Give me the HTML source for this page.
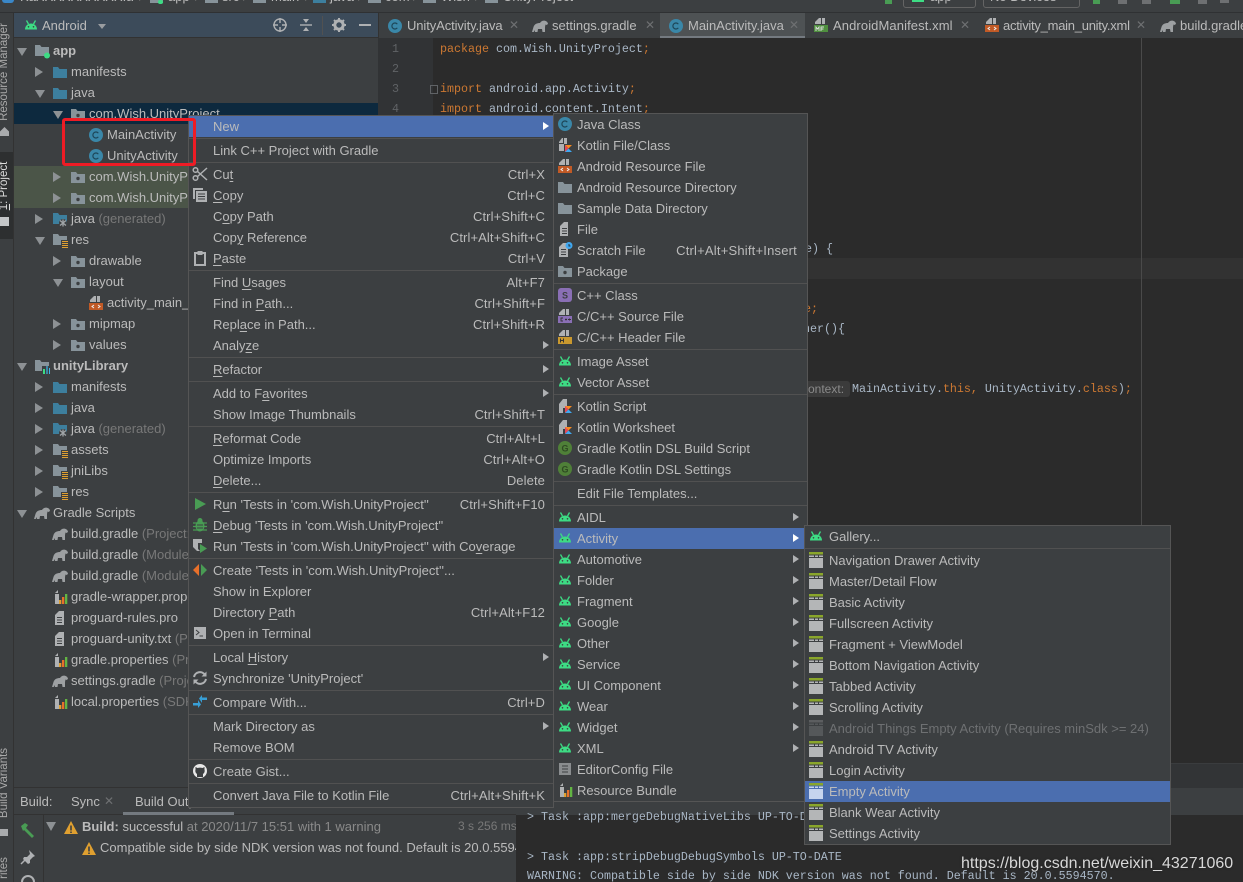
<!DOCTYPE html>
<html><head><meta charset="utf-8"><title>Android Studio</title>
<style>
*{box-sizing:border-box}
html,body{margin:0;padding:0;width:1243px;height:882px;overflow:hidden;background:#3c3f41}
body{position:relative;font:13px/21px "Liberation Sans",sans-serif;color:#bbb}
#root{position:absolute;left:0;top:0;width:1243px;height:882px;overflow:hidden}
.p{position:absolute;white-space:nowrap}
svg{position:absolute;overflow:visible}
u{text-decoration-thickness:1px;text-underline-offset:2px}
.mono{font-family:"Liberation Mono",monospace;font-size:11.67px;line-height:20px;color:#a9b7c6}
.k{color:#cc7832}
.tree{position:absolute;left:14px;top:40px;width:364px}
.r{position:relative;height:21px;white-space:nowrap;color:#bbb}
.r svg.ic{width:16px;height:16px;top:3px}
.r .ar{position:absolute;top:6px;width:0;height:0}
.ar.c{border-left:8px solid #8d9194;border-top:5px solid transparent;border-bottom:5px solid transparent}
.ar.o{border-top:8px solid #8d9194;border-left:5px solid transparent;border-right:5px solid transparent;margin-top:2px}
.t0{padding-left:39px}.t0 .ar{left:3px}.t0 svg.ic{left:20px}
.t1{padding-left:57px}.t1 .ar{left:21px}.t1 svg.ic{left:38px}
.t2{padding-left:75px}.t2 .ar{left:39px}.t2 svg.ic{left:56px}
.t3{padding-left:93px}.t3 svg.ic{left:74px}
.g{color:#787878}.b{font-weight:bold}
.menu{position:absolute;background:#3c3f41;border:1px solid #555}
.m{position:relative;height:21px;padding-left:24px;white-space:nowrap;color:#bbb}
.m svg{width:16px;height:16px;left:3px;top:2px}
.m b{position:absolute;right:8px;top:0;font-weight:normal;letter-spacing:.1px}
.m.s:after{content:"";position:absolute;right:4px;top:6px;border-left:6px solid #afb1b3;border-top:4.5px solid transparent;border-bottom:4.5px solid transparent}
.m.h{background:#4b6eaf}
.m.h.s:after{border-left-color:#fff}
#m2 .m{padding-left:23px}
#m2 .m.s:after{right:8px}
#m2 .m b{right:10px;letter-spacing:.2px}
.sp{height:3px;position:relative}
.sp:after{content:"";position:absolute;left:0;right:0;top:1px;height:1px;background:#515151}
.tab{position:absolute;top:13px;height:25px;line-height:25px;white-space:nowrap;color:#bbb}
.x{position:absolute;top:13px;line-height:25px;color:#6e7072;font-size:12px}
.bc{position:absolute;top:-14px;color:#bbb}
.fo{position:absolute;top:0;width:13px;height:3px;background:#87939a}
.side{font-size:11.5px;line-height:14px;height:14px;text-align:center;color:#aaa;transform:rotate(-90deg)}
</style></head><body><div id="root">
<svg width="0" height="0" style="position:absolute">
<defs>
<symbol id="and" viewBox="0 0 16 16"><path d="M2 12.500c0-3.500 2.500-6 6-6s6 2.500 6 6z" fill="#3ddc84"/><path d="M3.500 3.500l2 3.500M12.500 3.500l-2 3.500" stroke="#3ddc84" stroke-width="1.300"/><circle cx="5.500" cy="9.800" r=".8" fill="#3c3f41"/><circle cx="10.500" cy="9.800" r=".8" fill="#3c3f41"/></symbol>
<symbol id="cls" viewBox="0 0 16 16"><circle cx="8" cy="8" r="7" fill="#3a87a8"/><path d="M10.300 6.200a3 3 0 1 0 0 3.600" fill="none" stroke="#1d4658" stroke-width="1.200"/></symbol>
<symbol id="fb" viewBox="0 0 16 16"><path d="M1 3h5l1.500 2H15v9H1z" fill="#3d7f9e"/></symbol>
<symbol id="fg" viewBox="0 0 16 16"><path d="M1 3h5l1.500 2H15v9H1z" fill="#87939a"/></symbol>
<symbol id="pk" viewBox="0 0 16 16"><path d="M1 3h5l1.500 2H15v9H1z" fill="#87939a"/><circle cx="8" cy="9.500" r="1.700" fill="#3c3f41"/></symbol>
<symbol id="fgen" viewBox="0 0 16 16"><path d="M1 2h5l1.500 2H15v9H1z" fill="#3d7f9e"/><circle cx="11" cy="12" r="4" fill="#3c3f41"/><path d="M8 9.500l6 5M14 9.500l-6 5M11 8.500v7" stroke="#a0a5a8" stroke-width="1.300"/></symbol>
<symbol id="fres" viewBox="0 0 16 16"><path d="M1 2h5l1.500 2H15v9H1z" fill="#87939a"/><rect x="9" y="8" width="7" height="8" fill="#3c3f41"/><path d="M10 9.500h6M10 11.500h6M10 13.500h6M10 15.500h6" stroke="#e0a030" stroke-width="1"/></symbol>
<symbol id="app" viewBox="0 0 16 16"><path d="M1 2h5l1.500 2H15v9H1z" fill="#87939a"/><circle cx="13" cy="12.500" r="3" fill="#3ddc84"/></symbol>
<symbol id="lib" viewBox="0 0 16 16"><path d="M1 2h5l1.500 2H15v9H1z" fill="#87939a"/><rect x="8" y="8" width="9" height="8" fill="#3c3f41"/><rect x="9" y="11" width="2" height="5" fill="#3ddc84"/><rect x="12" y="8" width="2" height="8" fill="#3a87a8"/><rect x="15" y="10" width="2" height="6" fill="#40b6e0"/></symbol>
<symbol id="ele" viewBox="0 0 16 16"><path d="M0 14l1.500-5C2.500 6 5 5 8 5c1-1.800 3-2.800 5-2.300 1.800.4 3 1.800 3 3.300l-1.500 1-1-.5-.5 2.500v5h-2.500l-.5-3H6l-.5 3H3l-.5-2-.7 2z" fill="#9da0a2"/></symbol>
<symbol id="prop" viewBox="0 0 16 16"><path d="M7 1v4H3v10h4z" fill="#afb1b3"/><path d="M6 1l-3 3h3z" fill="#afb1b3"/><rect x="7" y="11" width="2.300" height="4" fill="#e0a030"/><rect x="10" y="8" width="2.300" height="7" fill="#e8702a"/><rect x="13" y="5" width="2.300" height="10" fill="#62b543"/></symbol>
<symbol id="txt" viewBox="0 0 16 16"><path d="M3 5l4-4h5v14H3z" fill="#afb1b3"/><path d="M5 7.500h5M5 10h5M5 12.500h5" stroke="#3c3f41"/></symbol>
<symbol id="ko" viewBox="0 0 16 16"><path d="M2 6l4-5h4v9H6v5H2z" fill="#afb1b3"/><path d="M8 8h7l-3.500 3.500z" fill="#f88a1f"/><path d="M8 8l3.500 3.500L8 15z" fill="#e44857"/><path d="M8 15l3.500-3.500L15 15z" fill="#40a8f0"/></symbol>
<symbol id="kfile" viewBox="0 0 16 16"><path d="M2 5l3-4h1v5H2zM7 1h3v6H7zM2 7h5v7H2z" fill="#afb1b3"/><path d="M8 8h7l-3.500 3.500z" fill="#f88a1f"/><path d="M8 8l3.500 3.500L8 15z" fill="#e44857"/><path d="M8 15l3.500-3.500L15 15z" fill="#40a8f0"/></symbol>
<symbol id="xml" viewBox="0 0 16 16"><path d="M6 1h2v6H2V5zM9 1h3v6H9z" fill="#afb1b3"/><rect x="1" y="8" width="14" height="7" fill="#c15a26"/><path d="M6 10l-2 1.500L6 13M10 10l2 1.500L10 13" fill="none" stroke="#eee" stroke-width="1"/></symbol>
<symbol id="mf" viewBox="0 0 16 16"><path d="M6 1h2v6H2V5zM9 1h3v6H9z" fill="#afb1b3"/><rect x="1" y="8" width="14" height="7" fill="#4f8f3f"/><path d="M3 14v-4l1.500 2 1.500-2v4M8 14v-4h3M8 12h2.500" fill="none" stroke="#ddd" stroke-width=".9"/></symbol>
<symbol id="cpp" viewBox="0 0 16 16"><path d="M6 1h2v6H2V5zM9 1h3v6H9z" fill="#afb1b3"/><rect x="1" y="8" width="14" height="7" fill="#8a6fb5"/><path d="M6 10H4v3h2M8 11.500h2M9 10.500v2M11 11.500h3M12.500 10.500v2" fill="none" stroke="#333" stroke-width=".9"/></symbol>
<symbol id="hdr" viewBox="0 0 16 16"><path d="M6 1h2v6H2V5zM9 1h3v6H9z" fill="#afb1b3"/><rect x="1" y="8" width="14" height="7" fill="#c9982e"/><path d="M3.500 9.500v4M6.500 9.500v4M3.500 11.500h3" stroke="#333" stroke-width="1"/></symbol>
<symbol id="file" viewBox="0 0 16 16"><path d="M3 5l4-4h4v14H3z" fill="#afb1b3"/><path d="M5 7.500h5M5 10h5M5 12.500h5" stroke="#3c3f41"/></symbol>
<symbol id="scr" viewBox="0 0 16 16"><path d="M2 5l4-4h5v14H2z" fill="#afb1b3"/><path d="M4 7.500h5M4 10h5M4 12.500h5" stroke="#3c3f41"/><circle cx="12" cy="3.500" r="3.500" fill="#40a8f0"/><path d="M12 2v2h1.500" stroke="#234" fill="none"/></symbol>
<symbol id="s" viewBox="0 0 16 16"><rect x="1" y="1" width="14" height="14" rx="3" fill="#8a6fb5"/><text x="8" y="11.500" font-size="9" font-weight="bold" text-anchor="middle" fill="#3c3f41" font-family="Liberation Sans">S</text></symbol>
<symbol id="gr" viewBox="0 0 16 16"><circle cx="8" cy="8" r="7" fill="#4f8038"/><text x="8" y="11.500" font-size="9" font-weight="bold" text-anchor="middle" fill="#2e4a22" font-family="Liberation Sans">G</text></symbol>
<symbol id="act" viewBox="0 0 16 16"><rect x="1" y="0" width="14" height="2.500" fill="#8aa62b"/><rect x="1" y="6" width="14" height="10" fill="#b4b6b7"/><path d="M1 4.200h5M7 4.200h3M11 4.200h4" stroke="#b4b6b7" stroke-width="1.500"/></symbol>
<symbol id="actl" viewBox="0 0 16 16"><rect x="1" y="0" width="14" height="2.500" fill="#8aa62b"/><rect x="1" y="6" width="14" height="10" fill="#c6d4ee"/><path d="M1 4.200h5M7 4.200h3M11 4.200h4" stroke="#c6d4ee" stroke-width="1.500"/></symbol>
<symbol id="actd" viewBox="0 0 16 16"><rect x="1" y="0" width="14" height="2.500" fill="#5c5e60"/><rect x="1" y="6" width="14" height="10" fill="#55585a"/><path d="M1 4.200h5M7 4.200h3M11 4.200h4" stroke="#55585a" stroke-width="1.500"/></symbol>
<symbol id="warn" viewBox="0 0 16 16"><path d="M8 1l7 13H1z" fill="#e0a030"/><path d="M8 5.500v5M8 11.500v1.500" stroke="#3c3f41" stroke-width="1.600"/></symbol>
</defs></svg>

<!-- top bar -->
<div class="p" style="left:0;top:0;width:1243px;height:13px;background:#3c3f41;border-bottom:1px solid #2f3133;overflow:hidden">
 <div class="p" style="left:2px;top:-6px;width:12px;height:9px;background:#3a87c8;border-radius:3px"></div>
 <div class="bc" style="left:20px;width:113px;overflow:hidden">KaXXXXXXXXXX.app</div><div class="bc" style="left:139px;color:#666">/</div>
 <div class="fo" style="left:150px"></div><div class="p" style="left:158px;top:0;width:5px;height:4px;background:#3ddc84;border-radius:2px"></div>
 <div class="bc" style="left:168px">app</div><div class="bc" style="left:195px;color:#666">/</div>
 <div class="fo" style="left:205px"></div><div class="bc" style="left:222px">src</div><div class="bc" style="left:243px;color:#666">/</div>
 <div class="fo" style="left:253px"></div><div class="bc" style="left:271px">main</div><div class="bc" style="left:305px;color:#666">/</div>
 <div class="fo" style="left:313px;background:#3d7f9e"></div><div class="bc" style="left:330px">java</div><div class="bc" style="left:358px;color:#666">/</div>
 <div class="fo" style="left:368px"></div><div class="bc" style="left:385px">com</div><div class="bc" style="left:413px;color:#666">/</div>
 <div class="fo" style="left:423px"></div><div class="bc" style="left:441px">Wish</div><div class="bc" style="left:475px;color:#666">/</div>
 <div class="fo" style="left:485px"></div><div class="bc" style="left:503px">UnityProject</div>
 <div class="p" style="left:885px;top:0;width:7px;height:4px;background:#499c54"></div>
 <div class="p" style="left:903px;top:-6px;width:73px;height:14px;border:1px solid #646464;border-radius:3px"></div>
 <div class="p" style="left:912px;top:0;width:12px;height:2px;background:#3ddc84"></div>
 <div class="p" style="left:983px;top:-6px;width:97px;height:14px;border:1px solid #646464;border-radius:3px"></div>
 <div class="bc" style="left:930px">app</div>
 <div class="bc" style="left:990px">No Devices</div>
 <div class="p" style="left:1093px;top:0;width:7px;height:4px;background:#499c54"></div>
 <div class="p" style="left:1118px;top:0;width:9px;height:4px;background:#6e7072"></div>
 <div class="p" style="left:1142px;top:0;width:9px;height:4px;background:#6e7072"></div>
 <div class="p" style="left:1170px;top:0;width:10px;height:4px;background:#499c54"></div>
 <div class="p" style="left:1198px;top:0;width:9px;height:4px;background:#6e7072"></div>
 <div class="p" style="left:1220px;top:0;width:9px;height:3px;background:#6e7072"></div>
</div>

<!-- left strip -->
<div class="p" style="left:0;top:13px;width:14px;height:869px;background:#3c3f41;border-right:1px solid #323232"></div>
<div class="p" style="left:0;top:152px;width:13px;height:87px;background:#2d2f30"></div>
<div class="p side" style="left:-46px;top:65px;width:100px">Resource Manager</div>
<div class="p" style="left:0;top:127px;width:9px;height:9px;background:#a9abad;clip-path:polygon(50% 0,100% 50%,100% 100%,0 100%,0 50%)"></div>
<div class="p side" style="left:-31px;top:179px;width:70px;color:#ddd"><u>1</u>: Project</div>
<div class="p" style="left:0;top:217px;width:9px;height:9px;background:#c4c6c8"></div>
<div class="p side" style="left:-46px;top:776px;width:100px">Build Variants</div>
<div class="p" style="left:0;top:829px;width:8px;height:7px;background:#a9abad"></div>
<div class="p side" style="left:-10px;top:861px;width:28px">rites</div>

<!-- project panel -->
<div class="p" style="left:14px;top:13px;width:364px;height:25px;background:#3c4b5a;border-bottom:1px solid #323232"></div>
<svg style="left:23px;top:17px" width="16" height="16"><use href="#and"/></svg>
<div class="p" style="left:42px;top:15px;color:#bbb">Android</div>
<div class="p" style="left:98px;top:24px;border-top:5px solid #9a9da0;border-left:4px solid transparent;border-right:4px solid transparent"></div>
<svg style="left:272px;top:17px" width="16" height="16" viewBox="0 0 16 16"><circle cx="8" cy="8" r="6" fill="none" stroke="#afb1b3" stroke-width="1.400"/><path d="M8 1v5M8 10v5M1 8h5M10 8h5" stroke="#afb1b3" stroke-width="1.400"/></svg>
<svg style="left:298px;top:17px" width="16" height="16" viewBox="0 0 16 16"><path d="M2 8h12" stroke="#afb1b3" stroke-width="1.400"/><path d="M5 2h6L8 6zM5 14h6l-3-4z" fill="#afb1b3"/></svg>
<div class="p" style="left:322px;top:16px;width:1px;height:19px;background:#515151"></div>
<svg style="left:331px;top:17px" width="16" height="16" viewBox="0 0 16 16"><circle cx="8" cy="8" r="4.200" fill="none" stroke="#afb1b3" stroke-width="3"/><path d="M8 1v3M8 12v3M1 8h3M12 8h3M3 3l2 2M11 11l2 2M3 13l2-2M11 5l2-2" stroke="#afb1b3" stroke-width="2"/></svg>
<div class="p" style="left:359px;top:24px;width:12px;height:2px;background:#afb1b3"></div>

<div class="p" style="left:14px;top:103px;width:364px;height:21px;background:#0d293e"></div>
<div class="p" style="left:14px;top:166px;width:364px;height:42px;background:#4b5548"></div>

<div class="tree">
<div class="r t0 b"><i class="ar o"></i><svg class="ic"><use href="#app"/></svg>app</div>
<div class="r t1"><i class="ar c"></i><svg class="ic"><use href="#fb"/></svg>manifests</div>
<div class="r t1"><i class="ar o"></i><svg class="ic"><use href="#fb"/></svg>java</div>
<div class="r t2"><i class="ar o"></i><svg class="ic"><use href="#pk"/></svg>com.Wish.UnityProject</div>
<div class="r t3"><svg class="ic"><use href="#cls"/></svg>MainActivity</div>
<div class="r t3"><svg class="ic"><use href="#cls"/></svg>UnityActivity</div>
<div class="r t2"><i class="ar c"></i><svg class="ic"><use href="#pk"/></svg>com.Wish.UnityProject</div>
<div class="r t2"><i class="ar c"></i><svg class="ic"><use href="#pk"/></svg>com.Wish.UnityProject</div>
<div class="r t1"><i class="ar c"></i><svg class="ic"><use href="#fgen"/></svg>java <span class="g">(generated)</span></div>
<div class="r t1"><i class="ar o"></i><svg class="ic"><use href="#fres"/></svg>res</div>
<div class="r t2"><i class="ar c"></i><svg class="ic"><use href="#pk"/></svg>drawable</div>
<div class="r t2"><i class="ar o"></i><svg class="ic"><use href="#pk"/></svg>layout</div>
<div class="r t3"><svg class="ic"><use href="#xml"/></svg>activity_main_unity.xml</div>
<div class="r t2"><i class="ar c"></i><svg class="ic"><use href="#pk"/></svg>mipmap</div>
<div class="r t2"><i class="ar c"></i><svg class="ic"><use href="#pk"/></svg>values</div>
<div class="r t0 b"><i class="ar o"></i><svg class="ic"><use href="#lib"/></svg>unityLibrary</div>
<div class="r t1"><i class="ar c"></i><svg class="ic"><use href="#fb"/></svg>manifests</div>
<div class="r t1"><i class="ar c"></i><svg class="ic"><use href="#fb"/></svg>java</div>
<div class="r t1"><i class="ar c"></i><svg class="ic"><use href="#fgen"/></svg>java <span class="g">(generated)</span></div>
<div class="r t1"><i class="ar c"></i><svg class="ic"><use href="#fres"/></svg>assets</div>
<div class="r t1"><i class="ar c"></i><svg class="ic"><use href="#fres"/></svg>jniLibs</div>
<div class="r t1"><i class="ar c"></i><svg class="ic"><use href="#fres"/></svg>res</div>
<div class="r t0"><i class="ar o"></i><svg class="ic"><use href="#ele"/></svg>Gradle Scripts</div>
<div class="r t1"><svg class="ic"><use href="#ele"/></svg>build.gradle <span class="g">(Project: Unity)</span></div>
<div class="r t1"><svg class="ic"><use href="#ele"/></svg>build.gradle <span class="g">(Module: app)</span></div>
<div class="r t1"><svg class="ic"><use href="#ele"/></svg>build.gradle <span class="g">(Module: unity)</span></div>
<div class="r t1"><svg class="ic"><use href="#prop"/></svg>gradle-wrapper.properties</div>
<div class="r t1"><svg class="ic"><use href="#txt"/></svg>proguard-rules.pro</div>
<div class="r t1"><svg class="ic"><use href="#txt"/></svg>proguard-unity.txt <span class="g">(ProGuard)</span></div>
<div class="r t1"><svg class="ic"><use href="#prop"/></svg>gradle.properties <span class="g">(Project)</span></div>
<div class="r t1"><svg class="ic"><use href="#ele"/></svg>settings.gradle <span class="g">(Project)</span></div>
<div class="r t1"><svg class="ic"><use href="#prop"/></svg>local.properties <span class="g">(SDK)</span></div>
</div>

<!-- tabs -->
<div class="p" style="left:378px;top:13px;width:865px;height:25px;background:#3c3f41;border-left:1px solid #323232"></div>
<div class="p" style="left:660px;top:13px;width:145px;height:25px;background:#4e5254"></div>
<div class="p" style="left:660px;top:36px;width:145px;height:3px;background:#747a80"></div>
<svg style="left:387px;top:18px" width="16" height="16"><use href="#cls"/></svg>
<div class="tab" style="left:407px;letter-spacing:-.1px">UnityActivity.java</div><div class="x" style="left:509px">✕</div>
<svg style="left:532px;top:18px" width="16" height="16"><use href="#ele"/></svg>
<div class="tab" style="left:552px">settings.gradle</div><div class="x" style="left:645px">✕</div>
<svg style="left:668px;top:18px" width="16" height="16"><use href="#cls"/></svg>
<div class="tab" style="left:688px">MainActivity.java</div><div class="x" style="left:789px">✕</div>
<svg style="left:813px;top:17px" width="16" height="16"><use href="#mf"/></svg>
<div class="tab" style="left:833px;letter-spacing:.1px">AndroidManifest.xml</div><div class="x" style="left:960px">✕</div>
<svg style="left:984px;top:17px" width="16" height="16"><use href="#xml"/></svg>
<div class="tab" style="left:1003px;letter-spacing:-.26px">activity_main_unity.xml</div><div class="x" style="left:1136px">✕</div>
<svg style="left:1160px;top:18px" width="16" height="16"><use href="#ele"/></svg>
<div class="tab" style="left:1180px;width:63px;overflow:hidden">build.gradle</div>

<!-- editor -->
<div class="p" style="left:378px;top:38px;width:865px;height:725px;background:#2b2b2b"></div>
<div class="p" style="left:378px;top:38px;width:55px;height:725px;background:#313335"></div>
<div class="p" style="left:433px;top:258px;width:810px;height:21px;background:#323232"></div>
<div class="p" style="left:1141px;top:38px;width:1px;height:725px;background:#4a4a4a"></div>
<div class="p mono" style="left:392px;top:39px;color:#606366">1</div>
<div class="p mono" style="left:392px;top:59px;color:#606366">2</div>
<div class="p mono" style="left:392px;top:79px;color:#606366">3</div>
<div class="p mono" style="left:392px;top:99px;color:#606366">4</div>
<div class="p" style="left:430px;top:85px;width:8px;height:9px;border:1px solid #606366"></div>
<div class="p mono" style="left:440px;top:39px"><span class="k">package</span> com.Wish.UnityProject<span class="k">;</span></div>
<div class="p mono" style="left:440px;top:79px"><span class="k">import</span> android.app.Activity<span class="k">;</span></div>
<div class="p mono" style="left:440px;top:99px"><span class="k">import</span> android.content.Intent<span class="k">;</span></div>
<div class="p mono" style="left:805px;top:239px">e) {</div>
<div class="p mono k" style="left:804px;top:299px">e;</div>
<div class="p mono" style="left:803px;top:319px">ner(){</div>
<div class="p" style="left:790px;top:381px;width:60px;height:16px;padding-left:18px;background:#3b3b3b;border-radius:3px;font-size:12px;line-height:16px;color:#8a8a8a">ontext:</div>
<div class="p mono" style="left:852px;top:379px">MainActivity.<span class="k">this</span><span class="k">,</span> UnityActivity.<span class="k">class</span>)<span class="k">;</span></div>

<!-- breadcrumb band and build panel -->
<div class="p" style="left:378px;top:763px;width:865px;height:25px;background:#323436;border-top:1px solid #3a3c3e"></div>
<div class="p" style="left:14px;top:788px;width:1229px;height:27px;background:#3c3f41"></div>
<div class="p" style="left:14px;top:787px;width:364px;height:1px;background:#323232"></div>
<div class="p" style="left:14px;top:814px;width:502px;height:1px;background:#323232"></div>
<div class="p" style="left:20px;top:791px;color:#bbb">Build:</div>
<div class="p" style="left:71px;top:791px;color:#bbb">Sync</div>
<div class="p" style="left:104px;top:791px;color:#6e7072;font-size:12px">✕</div>
<div class="p" style="left:135px;top:791px;color:#bbb">Build Output</div>
<div class="p" style="left:123px;top:812px;width:111px;height:3px;background:#747a80"></div>
<div class="p" style="left:43px;top:815px;width:1px;height:67px;background:#323232"></div>
<svg style="left:20px;top:822px" width="16" height="16" viewBox="0 0 16 16"><path d="M1 4l4-3 3 2-2 3 8 8-2 2-8-8-1 1z" fill="#499c54"/></svg>
<svg style="left:20px;top:849px" width="16" height="16" viewBox="0 0 16 16"><path d="M9 1l6 6-2 1-3 3v3l-2 1-5-5 1-2h3l3-3z" fill="#afb1b3"/><path d="M5 11l-4 4" stroke="#afb1b3" stroke-width="1.500"/></svg>
<svg style="left:20px;top:872px" width="16" height="10" viewBox="0 0 16 10"><path d="M2 10a6 6 0 0 1 12 0" fill="none" stroke="#afb1b3" stroke-width="2"/></svg>
<div class="p" style="left:46px;top:822px;border-top:9px solid #8d9194;border-left:5px solid transparent;border-right:5px solid transparent"></div>
<svg style="left:63px;top:820px" width="16" height="16"><use href="#warn"/></svg>
<div class="p" style="left:82px;top:816px"><span class="b">Build:</span> successful <span style="color:#8a8a8a">at 2020/11/7 15:51 with 1 warning</span></div>
<div class="p" style="left:458px;top:816px;color:#787878;font-size:12px">3 s 256 ms</div>
<svg style="left:81px;top:841px" width="16" height="16"><use href="#warn"/></svg>
<div class="p" style="left:100px;top:837px;width:416px;overflow:hidden">Compatible side by side NDK version was not found. Default is 20.0.5594570.</div>
<div class="p" style="left:516px;top:815px;width:727px;height:67px;background:#2b2b2b"></div>
<div class="p mono" style="left:527px;top:807px">&gt; Task :app:mergeDebugNativeLibs UP-TO-DATE</div>
<div class="p mono" style="left:527px;top:847px">&gt; Task :app:stripDebugDebugSymbols UP-TO-DATE</div>
<div class="p mono" style="left:527px;top:869.500px;height:12px;line-height:12px;overflow:hidden">WARNING: Compatible side by side NDK version was not found. Default is 20.0.5594570.</div>

<!-- menu 1 -->
<div class="menu" style="left:188px;top:115px;width:366px;height:693px">
<div class="m s h">New</div><div class="sp"></div>
<div class="m">Link C++ Project with Gradle</div><div class="sp"></div>
<div class="m"><svg viewBox="0 0 16 16"><circle cx="3.500" cy="12" r="2.300" fill="none" stroke="#afb1b3" stroke-width="1.500"/><circle cx="3.500" cy="4" r="2.300" fill="none" stroke="#afb1b3" stroke-width="1.500"/><path d="M5 5l10 9M5 11l10-9" stroke="#afb1b3" stroke-width="1.500"/></svg>Cu<u>t</u><b>Ctrl+X</b></div>
<div class="m"><svg viewBox="0 0 16 16"><path d="M1 1h10v2H3v9H1z" fill="#afb1b3"/><rect x="4" y="4" width="11" height="11" fill="#afb1b3"/><path d="M6 7h7M6 9.500h7M6 12h7" stroke="#3c3f41"/></svg><u>C</u>opy<b>Ctrl+C</b></div>
<div class="m">C<u>o</u>py Path<b>Ctrl+Shift+C</b></div>
<div class="m">Cop<u>y</u> Reference<b>Ctrl+Alt+Shift+C</b></div>
<div class="m"><svg viewBox="0 0 16 16"><path d="M3 3h10v12H3z" fill="none" stroke="#afb1b3" stroke-width="2"/><rect x="5.500" y="1" width="5" height="4" fill="#afb1b3"/></svg><u>P</u>aste<b>Ctrl+V</b></div><div class="sp"></div>
<div class="m">Find <u>U</u>sages<b>Alt+F7</b></div>
<div class="m">Find in <u>P</u>ath...<b>Ctrl+Shift+F</b></div>
<div class="m">Repl<u>a</u>ce in Path...<b>Ctrl+Shift+R</b></div>
<div class="m s">Analy<u>z</u>e</div><div class="sp"></div>
<div class="m s"><u>R</u>efactor</div><div class="sp"></div>
<div class="m s">Add to F<u>a</u>vorites</div>
<div class="m">Show Image Thumbnails<b>Ctrl+Shift+T</b></div><div class="sp"></div>
<div class="m"><u>R</u>eformat Code<b>Ctrl+Alt+L</b></div>
<div class="m">Optimize Imports<b>Ctrl+Alt+O</b></div>
<div class="m"><u>D</u>elete...<b>Delete</b></div><div class="sp"></div>
<div class="m"><svg viewBox="0 0 16 16"><path d="M3 2l11 6-11 6z" fill="#499c54"/></svg>R<u>u</u>n 'Tests in 'com.Wish.UnityProject''<b>Ctrl+Shift+F10</b></div>
<div class="m"><svg viewBox="0 0 16 16"><ellipse cx="8" cy="9" rx="4.500" ry="5.500" fill="#499c54"/><circle cx="8" cy="3.500" r="2.500" fill="#499c54"/><path d="M1 6h14M1 9.500h14M1 13h14" stroke="#499c54" stroke-width="1.300"/><path d="M5 8h6M5 11h6" stroke="#3c3f41"/></svg><u>D</u>ebug 'Tests in 'com.Wish.UnityProject''</div>
<div class="m"><svg viewBox="0 0 16 16"><path d="M1 1h9v4H6v6l2 2H5L1 9z" fill="#afb1b3"/><path d="M8 6l7 4.500L8 15z" fill="#499c54"/></svg>Run 'Tests in 'com.Wish.UnityProject'' with Co<u>v</u>erage</div><div class="sp"></div>
<div class="m"><svg viewBox="0 0 16 16"><path d="M7 2v12L1 8z" fill="#e8702a"/><path d="M9 2v12l6-6z" fill="#499c54"/></svg>Create 'Tests in 'com.Wish.UnityProject''...</div>
<div class="m">Show in Explorer</div>
<div class="m">Directory <u>P</u>ath<b>Ctrl+Alt+F12</b></div>
<div class="m"><svg viewBox="0 0 16 16"><rect x="2" y="2" width="12" height="12" fill="#afb1b3"/><path d="M4 5l3 2.500L4 10M7.500 11H11" fill="none" stroke="#3c3f41" stroke-width="1"/></svg>Open in Terminal</div><div class="sp"></div>
<div class="m s">Local <u>H</u>istory</div>
<div class="m"><svg viewBox="0 0 16 16"><path d="M2 7a6 6 0 0 1 11-2M14 9a6 6 0 0 1-11 2" fill="none" stroke="#afb1b3" stroke-width="2"/><path d="M14.500 1.500v5h-5zM1.500 14.500v-5h5z" fill="#afb1b3"/></svg>Synchronize 'UnityProject'</div><div class="sp"></div>
<div class="m"><svg viewBox="0 0 16 16"><path d="M1 10h5V7l3 4.500L6 15v-2.500H1" fill="#389fd6" transform="translate(0 -1)"/><path d="M15 6h-5V9L7 4.500 10 1v2.500h5" fill="#389fd6"/></svg>Compare With...<b>Ctrl+D</b></div><div class="sp"></div>
<div class="m s">Mark Directory as</div>
<div class="m">Remove BOM</div><div class="sp"></div>
<div class="m"><svg viewBox="0 0 16 16"><circle cx="8" cy="8" r="7" fill="#e8e8e8"/><path d="M5 14v-3c-1.500-1-2-2.500-1.500-4.500L3.500 4l2 1c1.500-.5 3.500-.5 5 0l2-1v2.500c.5 2 0 3.500-1.500 4.500v3z" fill="#3c3f41"/></svg>Create Gist...</div><div class="sp"></div>
<div class="m">Convert Java File to Kotlin File<b>Ctrl+Alt+Shift+K</b></div>
</div>

<!-- menu 2 -->
<div class="menu" id="m2" style="left:553px;top:113px;width:255px;height:689px">
<div class="m"><svg><use href="#cls"/></svg>Java Class</div>
<div class="m"><svg><use href="#kfile"/></svg>Kotlin File/Class</div>
<div class="m"><svg><use href="#xml"/></svg>Android Resource File</div>
<div class="m"><svg><use href="#fg"/></svg>Android Resource Directory</div>
<div class="m"><svg><use href="#fg"/></svg>Sample Data Directory</div>
<div class="m"><svg><use href="#file"/></svg>File</div>
<div class="m"><svg><use href="#scr"/></svg>Scratch File<b>Ctrl+Alt+Shift+Insert</b></div>
<div class="m"><svg><use href="#pk"/></svg>Package</div><div class="sp"></div>
<div class="m"><svg><use href="#s"/></svg>C++ Class</div>
<div class="m"><svg><use href="#cpp"/></svg>C/C++ Source File</div>
<div class="m"><svg><use href="#hdr"/></svg>C/C++ Header File</div><div class="sp"></div>
<div class="m"><svg><use href="#and"/></svg>Image Asset</div>
<div class="m"><svg><use href="#and"/></svg>Vector Asset</div><div class="sp"></div>
<div class="m"><svg><use href="#ko"/></svg>Kotlin Script</div>
<div class="m"><svg><use href="#ko"/></svg>Kotlin Worksheet</div>
<div class="m"><svg><use href="#gr"/></svg>Gradle Kotlin DSL Build Script</div>
<div class="m"><svg><use href="#gr"/></svg>Gradle Kotlin DSL Settings</div><div class="sp"></div>
<div class="m">Edit File Templates...</div><div class="sp"></div>
<div class="m s"><svg><use href="#and"/></svg>AIDL</div>
<div class="m s h"><svg><use href="#and"/></svg>Activity</div>
<div class="m s"><svg><use href="#and"/></svg>Automotive</div>
<div class="m s"><svg><use href="#and"/></svg>Folder</div>
<div class="m s"><svg><use href="#and"/></svg>Fragment</div>
<div class="m s"><svg><use href="#and"/></svg>Google</div>
<div class="m s"><svg><use href="#and"/></svg>Other</div>
<div class="m s"><svg><use href="#and"/></svg>Service</div>
<div class="m s"><svg><use href="#and"/></svg>UI Component</div>
<div class="m s"><svg><use href="#and"/></svg>Wear</div>
<div class="m s"><svg><use href="#and"/></svg>Widget</div>
<div class="m s"><svg><use href="#and"/></svg>XML</div>
<div class="m"><svg viewBox="0 0 16 16"><path d="M2 2h12v12H2z" fill="#8a8d8f"/><path d="M5 5h6M5 8h6M5 11h6" stroke="#3c3f41"/></svg>EditorConfig File</div>
<div class="m"><svg><use href="#prop"/></svg>Resource Bundle</div>
</div>

<!-- menu 3 -->
<div class="menu" style="left:804px;top:525px;width:367px;height:320px">
<div class="m"><svg><use href="#and"/></svg>Gallery...</div><div class="sp"></div>
<div class="m"><svg><use href="#act"/></svg>Navigation Drawer Activity</div>
<div class="m"><svg><use href="#act"/></svg>Master/Detail Flow</div>
<div class="m"><svg><use href="#act"/></svg>Basic Activity</div>
<div class="m"><svg><use href="#act"/></svg>Fullscreen Activity</div>
<div class="m"><svg><use href="#act"/></svg>Fragment + ViewModel</div>
<div class="m"><svg><use href="#act"/></svg>Bottom Navigation Activity</div>
<div class="m"><svg><use href="#act"/></svg>Tabbed Activity</div>
<div class="m"><svg><use href="#act"/></svg>Scrolling Activity</div>
<div class="m" style="color:#6e7072"><svg><use href="#actd"/></svg>Android Things Empty Activity (Requires minSdk &gt;= 24)</div>
<div class="m"><svg><use href="#act"/></svg>Android TV Activity</div>
<div class="m"><svg><use href="#act"/></svg>Login Activity</div>
<div class="m h"><svg><use href="#actl"/></svg>Empty Activity</div>
<div class="m"><svg><use href="#act"/></svg>Blank Wear Activity</div>
<div class="m"><svg><use href="#act"/></svg>Settings Activity</div>
</div>

<!-- red annotation -->
<div class="p" style="left:62px;top:118px;width:134px;height:48px;border:3px solid #ee1c25;border-radius:3px"></div>

<!-- watermark -->
<div class="p" style="left:961px;top:853px;font-size:16px;color:#d8d8d8;text-shadow:0 0 2px #222">https://blog.csdn.net/weixin_43271060</div>
</div></body></html>
